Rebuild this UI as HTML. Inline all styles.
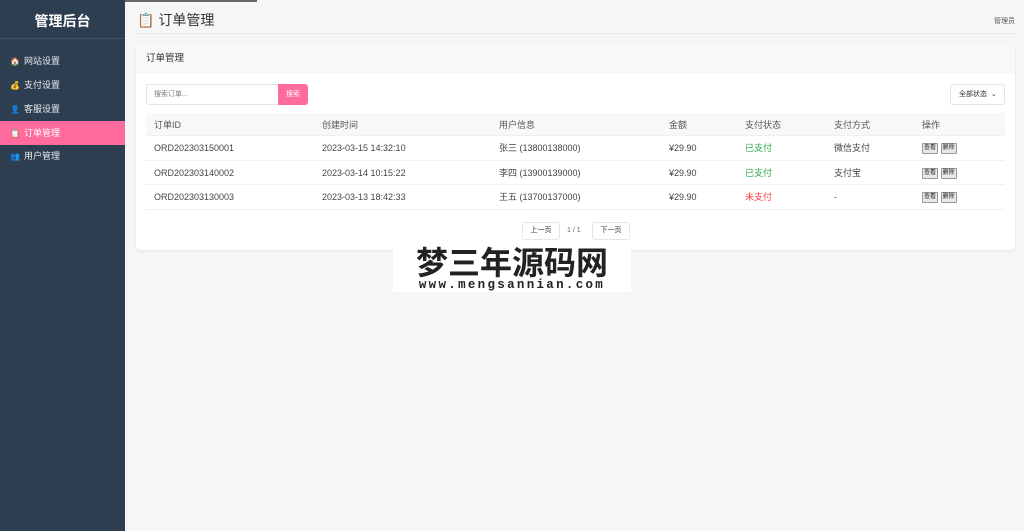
<!DOCTYPE html>
<html><head><meta charset="utf-8"><style>
*{box-sizing:border-box;margin:0;padding:0}
body{width:1024px;height:531px;background:#f5f6f8;font-family:"Liberation Sans","Noto Sans CJK SC",sans-serif;position:relative;overflow:hidden;color:#333}
.sb{position:absolute;left:0;top:0;width:125px;height:531px;background:#2c3e50}
.sb h1{position:absolute;top:11px;width:125px;text-align:center;color:#fff;font-size:14px;font-weight:bold}
.sb .dv{position:absolute;top:38px;left:0;width:125px;height:1px;background:#3d5166}
.mi{position:absolute;left:0;width:125px;height:24px;line-height:24px;color:#e8ecef;font-size:9px;padding-left:10px}
.mi span{display:inline-block;width:14px;font-size:8px}
.mi.a{background:#ff6b9d;color:#fff}
.topline{position:absolute;left:125px;top:0;width:132px;height:2px;background:#666}
.ht{position:absolute;left:137px;top:10px;font-size:14px;color:#333}
.ad{position:absolute;right:9px;top:16px;font-size:7px;color:#555}
.hl{position:absolute;left:136px;top:33px;width:879px;height:1px;background:#e6e8eb}
.card{position:absolute;left:136px;top:44px;width:879px;height:206px;background:#fff;border-radius:4px;box-shadow:0 1px 3px rgba(0,0,0,.08);overflow:hidden}
.ch{height:29px;background:#f7f8fa;font-size:9.5px;line-height:29px;padding-left:10px;color:#333}
.in{position:absolute;left:10px;top:40px;width:133px;height:21px;border:1px solid #e3e5e8;border-radius:3px 0 0 3px;font-size:7px;color:#777;line-height:19px;padding-left:7px}
.bt{position:absolute;left:142px;top:40px;width:30px;height:21px;background:#ff6b9d;color:#fff;font-size:7px;line-height:21px;text-align:center;border-radius:0 3px 3px 0}
.sel{position:absolute;left:814px;top:40px;width:55px;height:21px;border:1px solid #e3e5e8;border-radius:3px;font-size:7px;line-height:19px;padding-left:8px;color:#333}
.tb{position:absolute;left:10px;top:69px;width:859px;font-size:9px;color:#444}
.r{position:relative;height:24.5px;border-bottom:1px solid #eef0f2}
.r.h{background:#f7f8fa;height:23px;color:#555}
.r div{position:absolute;top:0;line-height:24px}
.g{color:#28a745}.red{color:#ff3b3b}
.ob{display:inline-block;vertical-align:middle;font-size:6px;line-height:9px;border:1px solid #999;background:#e8e8e8;padding:0 1px;border-radius:1px;color:#222}
.pg{position:absolute;top:178px;height:18px;border:1px solid #e3e5e8;border-radius:3px;font-size:7px;line-height:16px;text-align:center;background:#fff;color:#333}
.wm{position:absolute;left:393px;top:243px;width:238px;height:49px;background:#fff;text-align:center}
.wm .a{font-size:32px;line-height:36px;color:#222;font-family:"Noto Sans CJK SC",sans-serif;font-weight:bold}
.wm .b{font-family:"Liberation Mono",monospace;font-weight:bold;font-size:12.5px;letter-spacing:2.3px;color:#222;line-height:12px}
</style></head><body>
<div class="sb"><h1>管理后台</h1><div class="dv"></div>
<div class="mi" style="top:49px"><span>🏠</span>网站设置</div>
<div class="mi" style="top:73px"><span>💰</span>支付设置</div>
<div class="mi" style="top:97px"><span>👤</span>客服设置</div>
<div class="mi a" style="top:121px"><span>📋</span>订单管理</div>
<div class="mi" style="top:144px"><span>👥</span>用户管理</div>
</div>
<div class="topline"></div>
<div class="ht">📋 订单管理</div>
<div class="ad">管理员</div>
<div class="hl"></div>
<div class="card">
<div class="ch">订单管理</div>
<div class="in">搜索订单...</div><div class="bt">搜索</div>
<div class="sel">全部状态 &nbsp;⌄</div>
<div class="tb">
<div class="r h"><div style="left:8px">订单ID</div><div style="left:176px">创建时间</div><div style="left:353px">用户信息</div><div style="left:523px">金额</div><div style="left:599px">支付状态</div><div style="left:688px">支付方式</div><div style="left:776px">操作</div></div>
<div class="r"><div style="left:8px">ORD202303150001</div><div style="left:176px">2023-03-15 14:32:10</div><div style="left:353px">张三 (13800138000)</div><div style="left:523px">¥29.90</div><div class="g" style="left:599px">已支付</div><div style="left:688px">微信支付</div><div style="left:776px"><span class="ob">查看</span> <span class="ob">删除</span></div></div>
<div class="r"><div style="left:8px">ORD202303140002</div><div style="left:176px">2023-03-14 10:15:22</div><div style="left:353px">李四 (13900139000)</div><div style="left:523px">¥29.90</div><div class="g" style="left:599px">已支付</div><div style="left:688px">支付宝</div><div style="left:776px"><span class="ob">查看</span> <span class="ob">删除</span></div></div>
<div class="r"><div style="left:8px">ORD202303130003</div><div style="left:176px">2023-03-13 18:42:33</div><div style="left:353px">王五 (13700137000)</div><div style="left:523px">¥29.90</div><div class="red" style="left:599px">未支付</div><div style="left:688px">-</div><div style="left:776px"><span class="ob">查看</span> <span class="ob">删除</span></div></div>
</div>
<div class="pg" style="left:386px;width:38px">上一页</div>
<div style="position:absolute;left:431px;top:178px;font-size:7px;line-height:18px;color:#666">1 / 1</div>
<div class="pg" style="left:456px;width:38px">下一页</div>
</div>
<div class="wm"><div class="a">梦三年源码网</div><div class="b">www.mengsannian.com</div></div>
</body></html>
